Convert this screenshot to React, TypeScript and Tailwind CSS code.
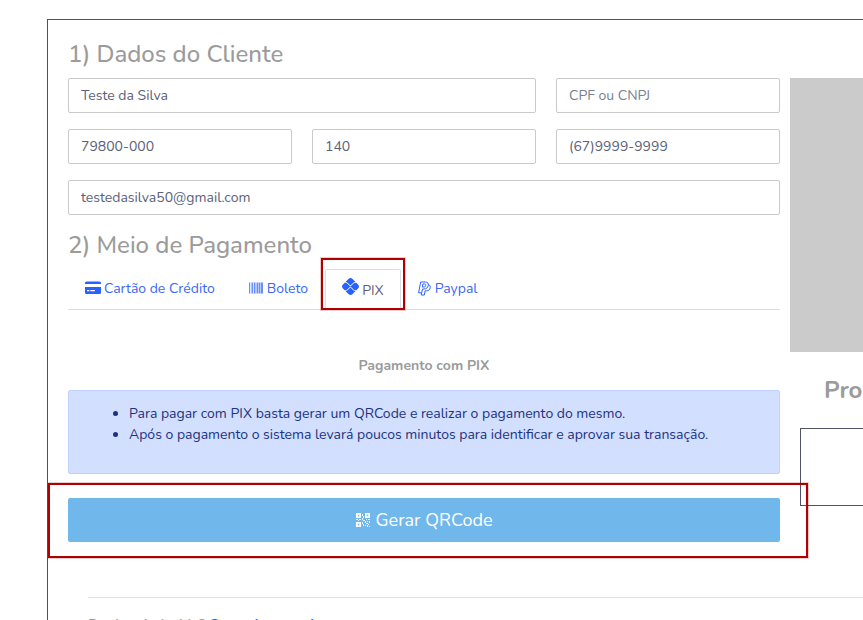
import type { ReactNode } from "react";
import { FaPix } from "react-icons/fa6";

type FieldProps = { label: string; value?: string; type?: string; className?: string };

function Field({ label, value, type = "text", className = "" }: FieldProps) {
  return (
    <input
      aria-label={label}
      placeholder={label}
      defaultValue={value}
      type={type}
      className={`h-[35px] w-full min-w-0 rounded-[2px] border border-[#cacaca] bg-white px-3 text-[14px] text-[#5c6177] outline-none placeholder:text-[#768192] ${className}`}
    />
  );
}

function CardIcon() {
  return (
    <svg viewBox="0 0 16 14" className="h-[14px] w-4" fill="#2861ff" aria-hidden="true">
      <path d="M1.500 .5h13A1.500 1.500 0 0 1 16 2v1H0V2A1.500 1.500 0 0 1 1.500 .5Z" />
      <path fillRule="evenodd" d="M0 6h16v5.700a1.300 1.300 0 0 1-1.300 1.300H1.300A1.300 1.300 0 0 1 0 11.700ZM2 9v1.200h2.300V9ZM5.300 9v1.200h4.500V9Z" />
    </svg>
  );
}

function BarcodeIcon() {
  return (
    <svg viewBox="0 0 15 12" className="h-3 w-[15px]" aria-hidden="true">
      <path fill="#2861ff" opacity=".35" d="M0 .5h14v11H0Z" />
      <path fill="#2861ff" opacity=".55" d="M0 .5h1v11H0ZM3 .5h1v11H3ZM5 .5h1v11H5ZM8 .5h1v11H8ZM10 .5h1v11h-1ZM12 .5h2v11h-2Z" />
      <path fill="#fff" opacity=".5" d="M1 .5h1v11H1ZM4 .5h1v11H4Z" />
    </svg>
  );
}

function PaypalIcon() {
  return (
    <svg viewBox="0 0 14 15" className="h-[15px] w-[14px]" fill="none" stroke="#2861ff" strokeWidth="1" strokeLinejoin="round" aria-hidden="true">
      <path d="M2.700 1h4.600c2.300 0 3.400 1.300 3 3.400C9.800 6.800 8.300 8 6 8H4.500l-.8 3.800H.6Z" />
      <path d="M4.900 3h1.700c1 0 1.400.5 1.200 1.400C7.600 5.500 7 6 5.900 6H4.300Z" />
      <path d="M10.400 3.600c1.600.5 2.100 1.700 1.800 3.200-.4 2-1.700 3-3.700 3H7.100l-.8 4.200H3.200l.5-2.200" />
    </svg>
  );
}

function QrIcon() {
  return (
    <svg viewBox="0 0 14 14" className="size-[14px]" fill="currentColor" aria-hidden="true">
      <path fillRule="evenodd" d="M0 0h5v5H0ZM1.700 1.700v1.600h1.600V1.700ZM9 0h5v5H9ZM10.700 1.700v1.600h1.600V1.700ZM0 9h5v5H0ZM1.700 10.700v1.600h1.600v-1.600Z" />
      <path opacity=".85" d="M6 1h1v2H6ZM7 3h1v2H7ZM6 5h1v2H6ZM0 6h2v1H0ZM3 6h2v1H3ZM2 7h1v1H2ZM7 7h2v1H7ZM10 6h1v1h-1ZM12 6h2v1h-2ZM6 9h1v2H6ZM7 11h1v2H7ZM9 8h1v2H9ZM11 8h1v1h-1ZM13 8h1v2h-1ZM10 10h2v1h-2ZM9 12h1v1H9ZM12 11h1v1h-1ZM11 12h1v2h-1ZM13 13h1v1h-1Z" />
    </svg>
  );
}

function Tab({ icon, children }: { icon: ReactNode; children: ReactNode }) {
  return (
    <button type="button" role="tab" className="flex h-[38px] items-center gap-[3px] px-[17px] text-[14px] text-[#3868f4]">
      {icon}
      {children}
    </button>
  );
}

export default function App() {
  return (
    <div className="h-screen overflow-hidden bg-white pt-[19px] pl-[47px] font-['Nunito','Lato',sans-serif] text-[14px]">
      <main className="relative min-h-full border-t border-l border-[#4f5166] pl-5">
        <div className="flex items-start gap-[10px]">
          <form className="min-w-0 flex-1" onSubmit={(e) => e.preventDefault()}>
            <h2 className="mt-[19px] mb-[9px] text-[24px] leading-[30px] font-medium text-[#9b9b9b]">1) Dados do Cliente</h2>
            <div className="grid grid-cols-3 gap-x-5 gap-y-4">
              <Field label="Nome" value="Teste da Silva" className="col-span-2" />
              <Field label="CPF ou CNPJ" />
              <Field label="CEP" value="79800-000" />
              <Field label="Número" value="140" />
              <Field label="Telefone" value="(67)9999-9999" type="tel" />
              <Field label="E-mail" value="testedasilva50@gmail.com" type="email" className="col-span-3" />
            </div>
            <h2 className="mt-[15px] mb-[9px] text-[24px] leading-[30px] font-medium text-[#9b9b9b]">2) Meio de Pagamento</h2>

            <div role="tablist" className="flex h-[41px] items-start border-b border-[#dcdde2]">
              <Tab icon={<CardIcon />}>Cartão de Crédito</Tab>
              <Tab icon={<BarcodeIcon />}>Boleto</Tab>
              <div className="relative">
                <button
                  type="button"
                  role="tab"
                  aria-selected="true"
                  className="flex h-10 items-end gap-[3px] rounded-t-[2px] border border-b-0 border-[#dcdde2] px-4 pb-2 text-[14px] leading-[21px] text-[#5c6177]"
                >
                  <FaPix className="mt-2 size-[17px] self-start text-[#2861ff]" />
                  PIX
                </button>
                <span className="pointer-events-none absolute -inset-x-1 -top-[11px] -bottom-px border-2 border-[#b00000] shadow-[0_0_0_1px_#b0000033]" />
              </div>
              <Tab icon={<PaypalIcon />}>Paypal</Tab>
            </div>

            <h3 className="mt-[45px] text-center text-[14px] leading-[21px] font-bold text-[#9b9b9b]">Pagamento com PIX</h3>
            <ul className="mt-[14px] h-[84px] list-disc rounded-[2px] border border-[#bfd1ff] bg-[#d3dfff] pt-3 pl-[60px] leading-[21px] text-[#1b3380]">
              <li>Para pagar com PIX basta gerar um QRCode e realizar o pagamento do mesmo.</li>
              <li>Após o pagamento o sistema levará poucos minutos para identificar e aprovar sua transação.</li>
            </ul>

            <div className="relative mt-6">
              <button
                type="submit"
                className="flex h-11 w-full items-center justify-center gap-[6px] rounded-[2px] bg-[#70b7eb] text-[18px] text-white"
              >
                <QrIcon />
                Gerar QRCode
              </button>
              <span className="pointer-events-none absolute -top-[15px] -right-7 -bottom-4 -left-5 border-2 border-[#b00000] shadow-[0_0_0_1px_#b0000033]" />
            </div>
          </form>

          <aside className="mt-[58px] w-[73px] shrink-0 overflow-hidden">
            <div className="h-[274px] bg-[#cbcbcb]" />
            <h2 className="mt-[23px] pl-[34px] text-[24px] leading-[30px] font-bold whitespace-nowrap text-[#9b9b9b]">Produto</h2>
            <div className="mt-[23px] ml-[10px] h-[78px] border border-r-0 border-[#4f5166]" />
          </aside>
        </div>

        <footer className="mt-[55px] ml-5 border-t border-[#e1e1e4] pt-4 leading-[21px] font-bold text-[#9b9b9b]">
          Produto indevido? <a href="#contato" className="text-[#2861ff]">Comunique aqui</a>
        </footer>
      </main>
    </div>
  );
}
